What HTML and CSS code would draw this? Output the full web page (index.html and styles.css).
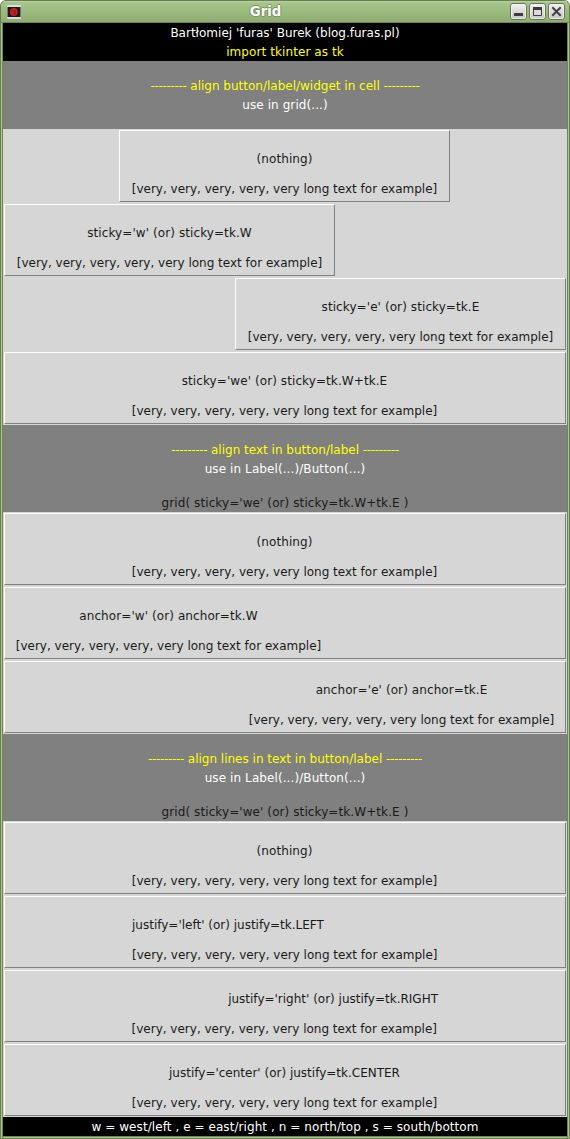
FILE: index.html
```html
<!DOCTYPE html>
<html lang="en">
<head>
<meta charset="utf-8">
<title>Grid</title>
<link rel="stylesheet" href="styles.css">
</head>
<body>
<div class="window">
  <header class="titlebar">
    <svg class="app-icon" width="14" height="14" viewBox="0 0 14 14">
      <rect width="14" height="14" rx="1" fill="#dedce0"/>
      <rect y="2" width="14" height="10" fill="#77737a"/>
      <rect x="1" y="2" width="12" height="10" fill="#171b1b"/>
      <circle cx="6.8" cy="7" r="4" fill="#c91f17"/>
      <path d="M4.5 6.5l2-1.5M6 8l3-2.500M7 9.500l2-1.500" stroke="#64201c" fill="none"/>
    </svg>
    <h1 class="title">Grid</h1>
    <div class="controls">
      <svg class="control" width="17" height="17" viewBox="0 0 17 17"><use href="#face"/><rect x="4" y="10" width="9" height="3" fill="#3c3c3c"/></svg>
      <svg class="control" width="17" height="17" viewBox="0 0 17 17"><use href="#face"/><path d="M4.500 4.500h8v8h-8z" fill="#dadada" stroke="#3c3c3c"/><path d="M4 4h9v3H4z" fill="#3c3c3c"/></svg>
      <svg class="control" width="17" height="17" viewBox="0 0 17 17"><use href="#face"/><path d="M4.300 4.300l8.400 8.400M12.700 4.300l-8.400 8.400" stroke="#404040" stroke-width="2"/></svg>
    </div>
  </header>
  <main class="content">
    <p class="label black white-text plain">Bartłomiej 'furas' Burek (blog.furas.pl)</p>
    <p class="label black yellow-text">import tkinter as tk</p>

    <p class="label gray yellow-text blank-above plain"><span class="dashes">---------</span> align button/label/widget in cell <span class="dashes">---------</span></p>
    <p class="label gray white-text blank-below">use in grid(...)</p>
    <div class="cell"><button class="button natural">
<span class="caption">(nothing)</span>

[very, very, very, very, very long text for example]</button></div>
    <div class="cell sticky-w"><button class="button natural">
<span class="caption">sticky='w' (or) sticky=tk.W</span>

[very, very, very, very, very long text for example]</button></div>
    <div class="cell sticky-e"><button class="button natural">
<span class="caption">sticky='e' (or) sticky=tk.E</span>

[very, very, very, very, very long text for example]</button></div>
    <div class="cell sticky-we"><button class="button">
<span class="caption">sticky='we' (or) sticky=tk.W+tk.E</span>

[very, very, very, very, very long text for example]</button></div>

    <p class="label gray yellow-text blank-above plain"><span class="dashes">---------</span> align text in button/label <span class="dashes">---------</span></p>
    <p class="label gray white-text blank-below">use in Label(...)/Button(...)</p>
    <p class="label gray">grid( sticky='we' (or) sticky=tk.W+tk.E )</p>
    <div class="cell sticky-we"><button class="button">
<span class="caption">(nothing)</span>

[very, very, very, very, very long text for example]</button></div>
    <div class="cell sticky-we"><button class="button anchor-w">
<span class="caption">anchor='w' (or) anchor=tk.W</span>

[very, very, very, very, very long text for example]</button></div>
    <div class="cell sticky-we"><button class="button anchor-e">
<span class="caption">anchor='e' (or) anchor=tk.E</span>

[very, very, very, very, very long text for example]</button></div>

    <p class="label gray yellow-text blank-above plain"><span class="dashes">---------</span> align lines in text in button/label <span class="dashes">---------</span></p>
    <p class="label gray white-text blank-below">use in Label(...)/Button(...)</p>
    <p class="label gray">grid( sticky='we' (or) sticky=tk.W+tk.E )</p>
    <div class="cell sticky-we"><button class="button">
<span class="caption">(nothing)</span>

[very, very, very, very, very long text for example]</button></div>
    <div class="cell sticky-we"><button class="button justify-left">
justify='left' (or) justify=tk.LEFT

[very, very, very, very, very long text for example]</button></div>
    <div class="cell sticky-we"><button class="button justify-right">
<span class="flush">justify='right' (or) justify=tk.RIGHT</span>

[very, very, very, very, very long text for example]</button></div>
    <div class="cell sticky-we"><button class="button">
justify='center' (or) justify=tk.CENTER

[very, very, very, very, very long text for example]</button></div>

    <p class="label black white-text footer">w = west/left , e = east/right , n = north/top , s = south/bottom</p>
  </main>
</div>
<svg class="defs" width="0" height="0">
  <defs>
    <linearGradient id="shine" x2="0" y2="1"><stop stop-color="#f2f2f2"/><stop offset="1" stop-color="#c4c4c4"/></linearGradient>
    <g id="face">
      <rect x=".5" y=".5" width="16" height="16" rx="2.500" fill="url(#shine)" stroke="#627950"/>
      <rect x="1.500" y="1.500" width="14" height="14" rx="1.500" fill="none" stroke="#f4f4f4" stroke-opacity=".75"/>
    </g>
  </defs>
</svg>
</body>
</html>
```

FILE: styles.css
```css
* { box-sizing: border-box; }

body {
  margin: 0;
  background: #fff;
  font: 12px/15px "DejaVu Sans", sans-serif;
  color: #1a1a1a;
}

.window {
  width: 570px;
  height: 1139px;
  padding: 0 2px 2px;
  border: 1px solid #667e52;
  border-radius: 6px 6px 0 0;
  background: linear-gradient(90deg, #abc88d 1px, #6d8856 1px 2px, transparent 2px calc(100% - 2px), #6d8856 calc(100% - 2px) calc(100% - 1px), #abc88d calc(100% - 1px)), #abc88d;
  overflow: hidden;
}

.titlebar {
  display: grid;
  grid-template-columns: 19px 1fr 60px;
  align-items: center;
  height: 22px;
  margin: 0 -2px;
  padding: 0 4px 0 6px;
  border-bottom: 1px solid #6d8856;
  background: linear-gradient(#b9cfa4 0 1px, #a8c58b 1px, #8fac71);
}

.title {
  margin: 0;
  text-align: center;
  font-size: 13.3px;
  line-height: 20px;
  color: #fff;
  text-shadow: 1px 0 #78945f, -1px 0 #78945f, 0 1px #78945f, 0 -1px #78945f;
}

.controls {
  display: flex;
  justify-content: flex-end;
  gap: 2px;
}

.app-icon, .control { display: block; }
.app-icon { margin-top: 1px; }

.content { box-shadow: 0 1px #6d8856; }

.label {
  margin: 0;
  padding: 3px 0 1px;
  text-align: center;
  letter-spacing: .09px;
  white-space: pre;
}

.plain { letter-spacing: 0; }
.footer { letter-spacing: .07px; }
.dashes { letter-spacing: -.33px; }
.black { background: #000; }
.gray { background: #808080; }
.white-text { color: #fff; }
.yellow-text { color: #ff0; }
.blank-above { padding-top: 18px; }
.blank-below { padding-bottom: 16px; }

.cell {
  display: flex;
  justify-content: center;
  padding: 1px 2px 1px 1px;
  background: #d6d6d6;
}

.sticky-w { justify-content: flex-start; }
.sticky-e { justify-content: flex-end; padding-right: 1px; }
.sticky-we { padding-right: 1px; }
.sticky-we .button { flex: 1; }

.button {
  height: 72px;
  padding: 6px 12px 4px 11px;
  border: 1px solid;
  border-color: #fff #808080 #808080 #fff;
  border-radius: 0;
  background: #d6d6d6;
  font: inherit;
  color: inherit;
  text-align: center;
  white-space: pre;
}

.caption { letter-spacing: .09px; }
.flush { margin-right: -1px; }

.natural { width: 331px; padding-right: 11px; }
.anchor-w { padding-right: 243px; padding-left: 10px; }
.anchor-e { padding-left: 243px; padding-right: 10px; }
.justify-left { padding-left: 127px; text-align: left; }
.justify-right { padding-right: 128px; text-align: right; }

.defs { position: absolute; }
```
